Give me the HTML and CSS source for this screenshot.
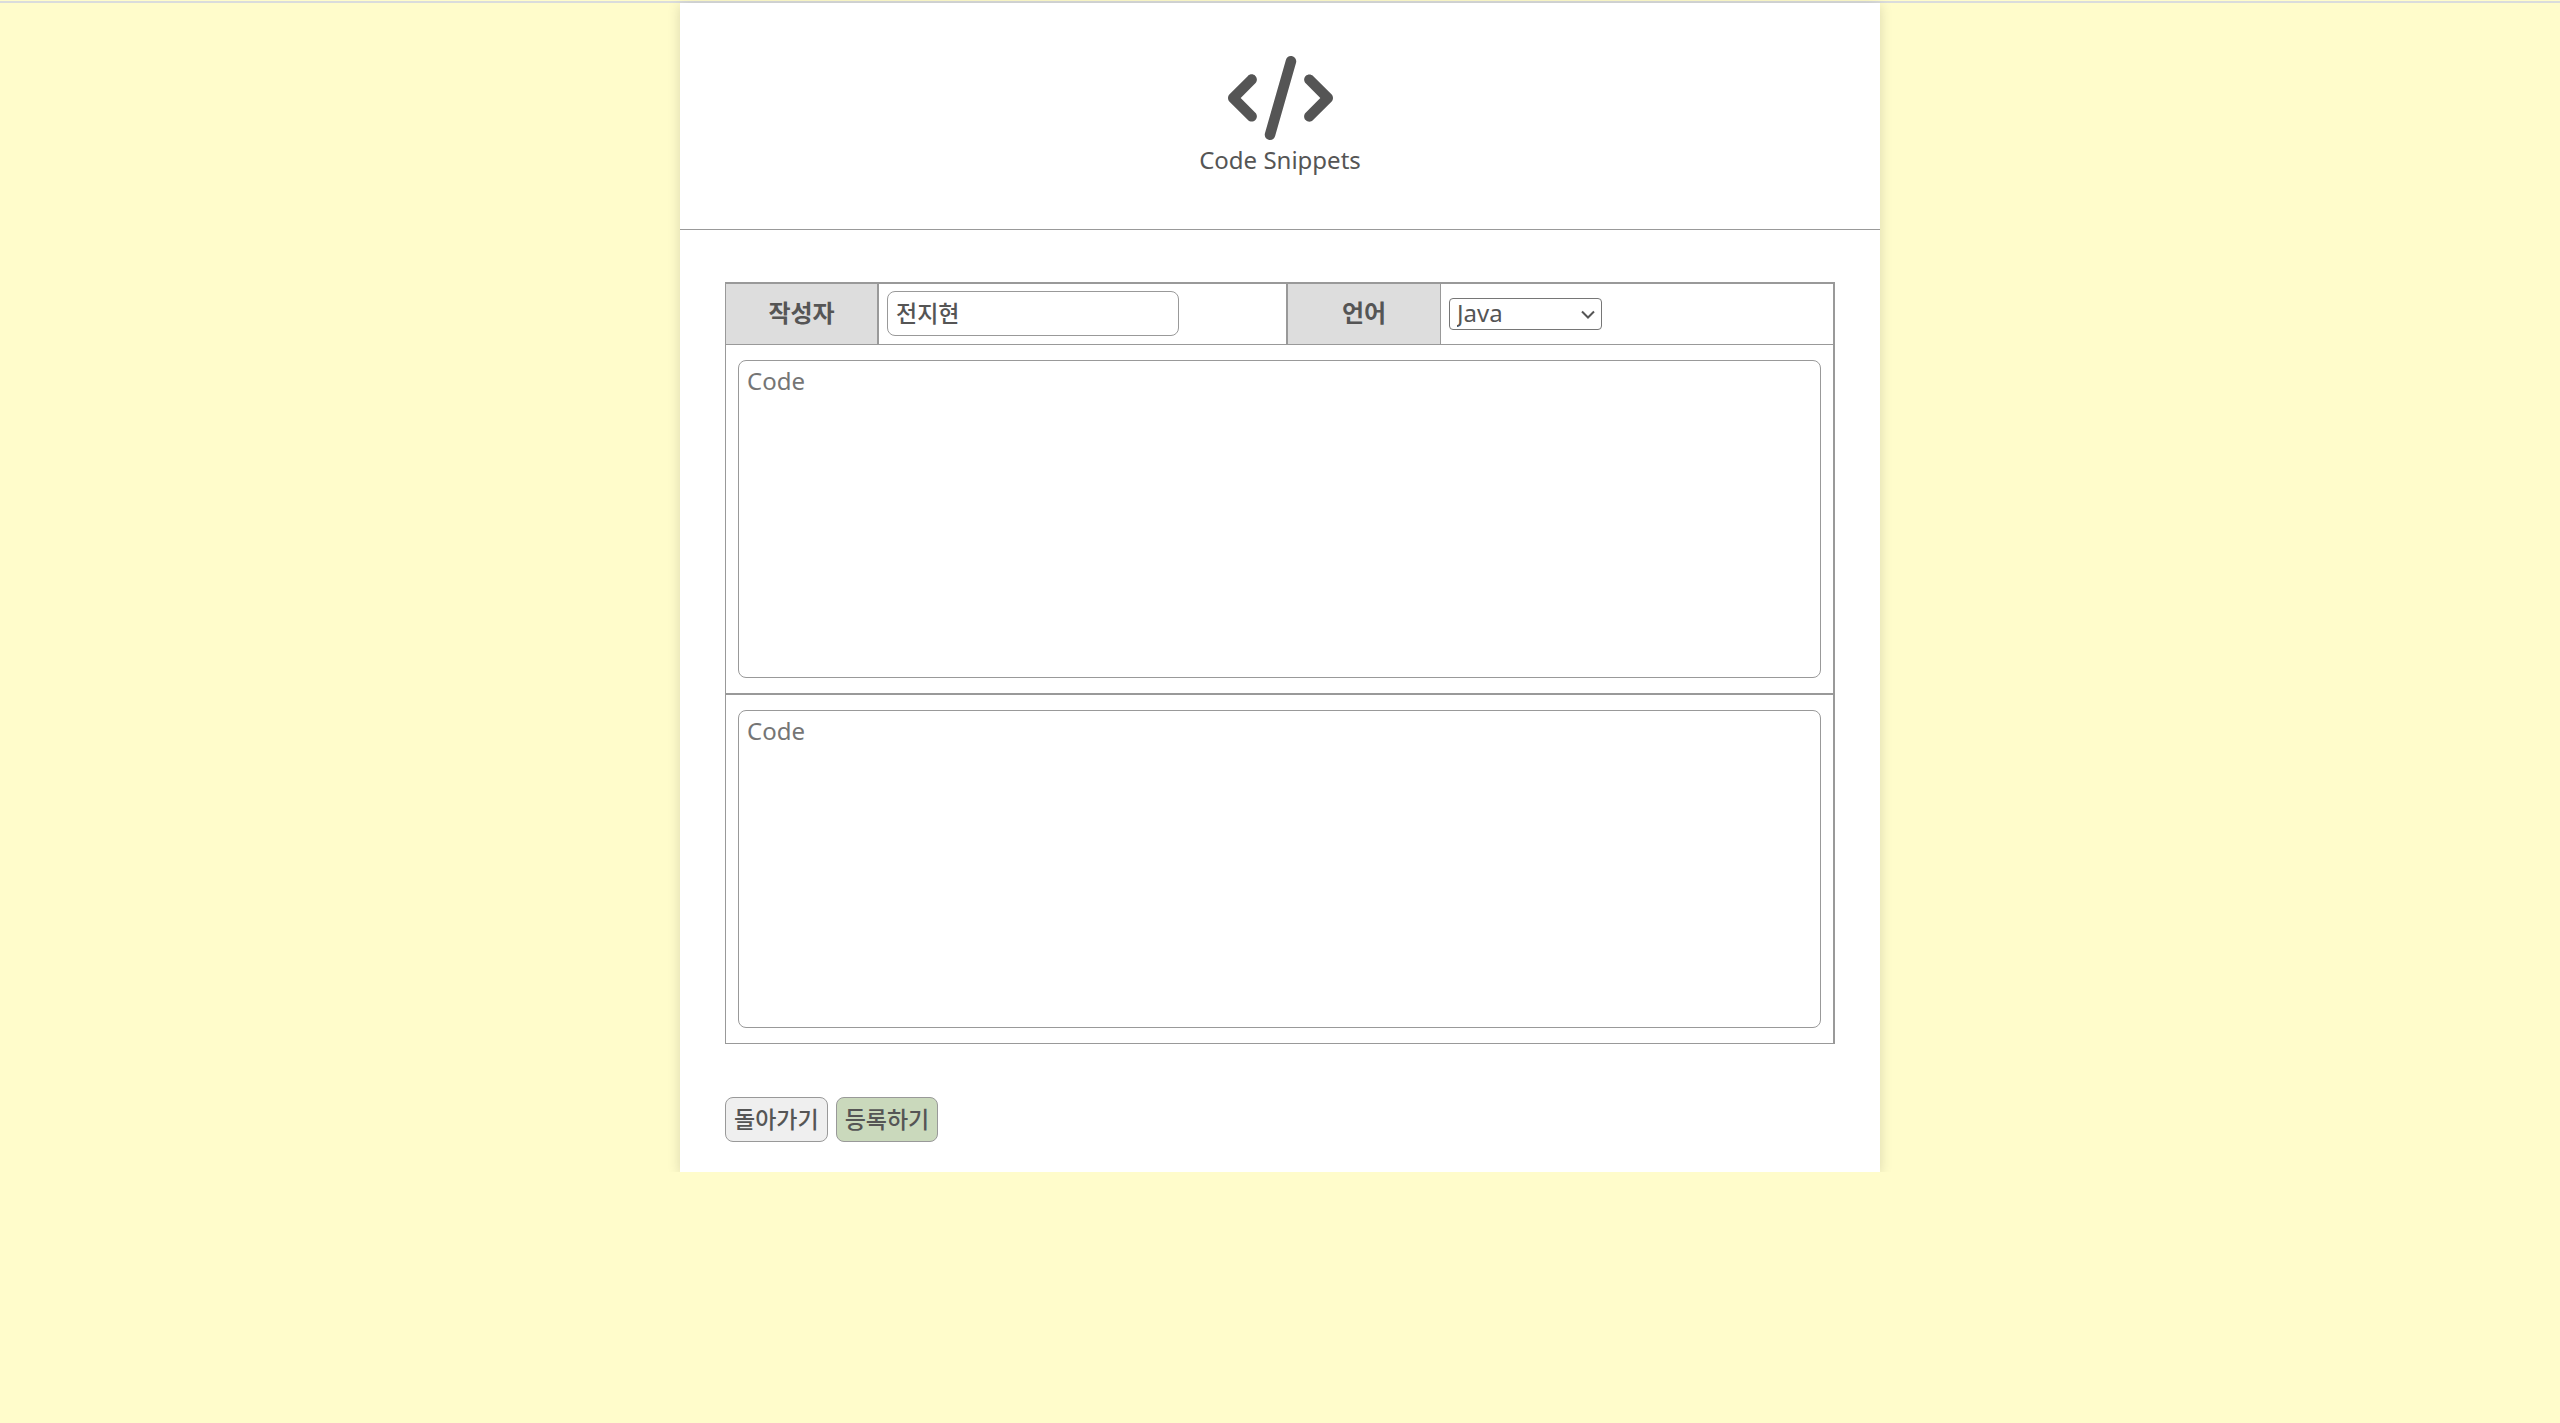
FILE: index.html
```html
<!DOCTYPE html>
<html lang="ko">
<head>
<meta charset="utf-8">
<title>Code Snippets</title>
<link rel="stylesheet" href="styles.css">
</head>
<body>
<main class="card">
  <header class="header">
    <svg class="logo" viewBox="0 0 640 512" aria-hidden="true"><path fill="currentColor" d="M392.8 1.2c-17-4.9-34.7 5-39.6 22l-128 448c-4.9 17 5 34.7 22 39.6s34.7-5 39.6-22l128-448c4.9-17-5-34.7-22-39.6zm80.6 120.1c-12.5 12.5-12.5 32.8 0 45.3L562.7 256l-89.4 89.4c-12.5 12.5-12.5 32.8 0 45.3s32.8 12.5 45.3 0l112-112c12.5-12.5 12.5-32.8 0-45.3l-112-112c-12.5-12.5-32.8-12.5-45.3 0zm-306.7 0c-12.5-12.5-32.8-12.5-45.3 0l-112 112c-12.5 12.5-12.5 32.8 0 45.3l112 112c12.5 12.5 32.8 12.5 45.3 0s12.5-32.8 0-45.3L77.3 256l89.4-89.4c12.5-12.5 12.5-32.8 0-45.3z"/></svg>
    <span>Code Snippets</span>
  </header>
  <form class="form">
    <table class="sheet">
      <colgroup><col class="col-label"><col class="col-writer"><col class="col-label"><col></colgroup>
      <tr>
        <th scope="row" class="edge"><label for="writer">작성자</label></th>
        <td class="edge"><input class="writer" id="writer" type="text" value="전지현"></td>
        <th scope="row"><label for="language">언어</label></th>
        <td><select class="language" id="language"><option>Java</option><option>JavaScript</option><option>Python</option></select></td>
      </tr>
      <tr>
        <td colspan="4" class="code-cell divided"><textarea class="code" placeholder="Code" aria-label="Code"></textarea></td>
      </tr>
      <tr>
        <td colspan="4" class="code-cell"><textarea class="code" placeholder="Code" aria-label="Code"></textarea></td>
      </tr>
    </table>
    <div class="actions">
      <button type="button" class="btn">돌아가기</button>
      <button type="submit" class="btn btn-primary">등록하기</button>
    </div>
  </form>
</main>
</body>
</html>
```
FILE: styles.css
```css
* { box-sizing: border-box; }

html { background: #fffccb; }

body {
  margin: 0;
  padding-top: 1px;
  color: #555;
  font: 24px/36px "Noto Sans", "Noto Sans CJK KR", sans-serif;
}

body::before {
  content: "";
  display: block;
  height: 2px;
  background: #dadcdc;
}

.card {
  max-width: 1200px;
  margin: 0 auto;
  background: #fff;
  box-shadow: 0 2px 12px rgba(0, 0, 0, 0.15);
}

.header {
  display: flex;
  flex-direction: column;
  align-items: center;
  gap: 2px;
  padding: 53px 0 51px;
  border-bottom: 1px solid #999;
}

.logo { width: 105px; height: 84px; }

.form { padding: 52px 45px 30px; }

.sheet {
  width: 100%;
  table-layout: fixed;
  border: 1px solid #999;
  border-width: 2px 2px 1px 1px;
  border-collapse: separate;
  border-spacing: 0;
}

.col-label { width: 153px; }
.col-writer { width: 409px; }

.sheet th,
.sheet td {
  height: 61px;
  padding: 0 8px;
  border-bottom: 1px solid #999;
  text-align: left;
  vertical-align: middle;
}

.sheet th {
  padding-bottom: 4px;
  background: #ddd;
  border-right: 1px solid #999;
  text-align: center;
  font-family: "Noto Sans CJK KR", sans-serif;
}

.sheet .edge { border-right: 2px solid #999; }
.sheet td.edge { padding-bottom: 1px; }

.sheet .code-cell { padding: 15px 12px; }
.sheet .divided { border-bottom-width: 2px; }
.sheet tr:last-child td { border-bottom: 0; }

.writer,
.code,
.btn {
  display: block;
  border: 1px solid #999;
  border-radius: 8px;
  background: #fff;
  color: inherit;
  font: inherit;
}

.writer,
.btn {
  height: 45px;
  padding: 0 8px 3px;
  font-family: "Noto Sans CJK KR", sans-serif;
  font-size: 23px;
  font-weight: 500;
}

.writer { width: 292px; }

.language {
  display: block;
  width: 153px;
  height: 32px;
  padding: 0 24px 2px 7px;
  appearance: none;
  border: 1px solid #767676;
  border-radius: 4px;
  background: #fff url("data:image/svg+xml,%3Csvg xmlns='http://www.w3.org/2000/svg' width='14' height='9' viewBox='0 0 14 9'%3E%3Cpath d='M1 1.5l6 6 6-6' fill='none' stroke='%23555' stroke-width='2'/%3E%3C/svg%3E") no-repeat right 6px center;
  color: inherit;
  font: inherit;
  line-height: 28px;
}

.code {
  width: 100%;
  height: 318px;
  padding: 2px 8px;
  resize: none;
}

.actions {
  display: flex;
  gap: 8px;
  margin-top: 53px;
}

.btn { background: #efefef; }

.btn-primary { background: #cad9bc; }
```
